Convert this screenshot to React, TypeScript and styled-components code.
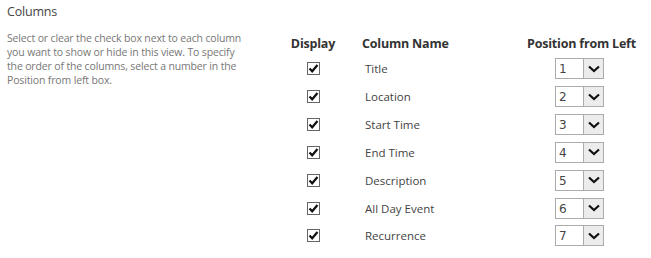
import React from "react";
import styled, { createGlobalStyle } from "styled-components";

const Global = createGlobalStyle`
  html, body { margin: 0; padding: 0; background: #fff; }
  body { font-family: "Open Sans", "Noto Sans", sans-serif; }
`;

const Page = styled.div`
  display: flex;
  width: 651px;
  height: 258px;
  box-sizing: border-box;
  padding: 0 0 0 7px;
`;

const LeftPane = styled.div`
  width: 273px;
  flex: none;
`;

const Heading = styled.div`
  font-size: 12.5px;
  color: #444;
  line-height: 16px;
  margin-top: 4px;
  letter-spacing: -0.2px;
`;

const Description = styled.div`
  margin-top: 11px;
  font-size: 10.5px;
  line-height: 14px;
  color: #777;
  width: 240px;
  letter-spacing: -0.15px;
`;

const Table = styled.div`
  display: grid;
  grid-template-columns: 66px 174px 126px;
  grid-template-rows: 22.2px;
  grid-auto-rows: 27.83px;
  margin-top: 32.9px;
  align-items: center;
`;

const HeaderCell = styled.div<{ $align?: string; $pad?: number }>`
  font-weight: 700;
  font-size: 12.5px;
  color: #333;
  text-align: ${(p) => p.$align || "left"};
  padding-left: ${(p) => p.$pad || 0}px;
  letter-spacing: -0.2px;
  white-space: nowrap;
`;

const CheckCell = styled.div`
  display: flex;
  justify-content: center;
`;

const Box = styled.div`
  width: 11px;
  height: 11px;
  border: 1px solid #666;
  background: #fff;
  display: flex;
  align-items: center;
  justify-content: center;
`;

const NameCell = styled.div`
  font-size: 11.5px;
  color: #444;
  padding-left: 19px;
  white-space: nowrap;
`;

const PosCell = styled.div`
  padding-left: 35px;
  display: flex;
`;

const Select = styled.div`
  width: 47px;
  height: 19px;
  border: 1px solid #ababab;
  display: flex;
  background: #fff;
`;

const SelectValue = styled.div`
  flex: 1;
  font-family: "DejaVu Sans", sans-serif;
  font-size: 12px;
  color: #444;
  padding-left: 3px;
  line-height: 20px;
`;

const SelectButton = styled.div`
  width: 19px;
  border-left: 1px solid #ababab;
  background: #ececec;
  display: flex;
  align-items: center;
  justify-content: center;
`;

const Check = () => (
  <svg width="11" height="11" viewBox="0 0 11 11">
    <path d="M1.5 5.5 L4.2 8.3 L9.5 2" fill="none" stroke="#111" strokeWidth="2.2" />
  </svg>
);

const Chevron = () => (
  <svg width="12" height="8" viewBox="0 0 12 8">
    <path d="M1 1.5 L6 6 L11 1.5" fill="none" stroke="#111" strokeWidth="2.2" />
  </svg>
);

const columns = [
  "Title",
  "Location",
  "Start Time",
  "End Time",
  "Description",
  "All Day Event",
  "Recurrence",
];

export default function App() {
  return (
    <>
      <Global />
      <Page>
        <LeftPane>
          <Heading>Columns</Heading>
          <Description>
            Select or clear the check box next to each column you want to show or hide in this
            view. To specify the order of the columns, select a number in the Position from left
            box.
          </Description>
        </LeftPane>
        <Table>
          <HeaderCell $align="center">Display</HeaderCell>
          <HeaderCell $pad={16}>Column Name</HeaderCell>
          <HeaderCell $pad={7}>Position from Left</HeaderCell>
          {columns.map((c, i) => (
            <React.Fragment key={c}>
              <CheckCell>
                <Box>
                  <Check />
                </Box>
              </CheckCell>
              <NameCell>{c}</NameCell>
              <PosCell>
                <Select>
                  <SelectValue>{i + 1}</SelectValue>
                  <SelectButton>
                    <Chevron />
                  </SelectButton>
                </Select>
              </PosCell>
            </React.Fragment>
          ))}
        </Table>
      </Page>
    </>
  );
}
